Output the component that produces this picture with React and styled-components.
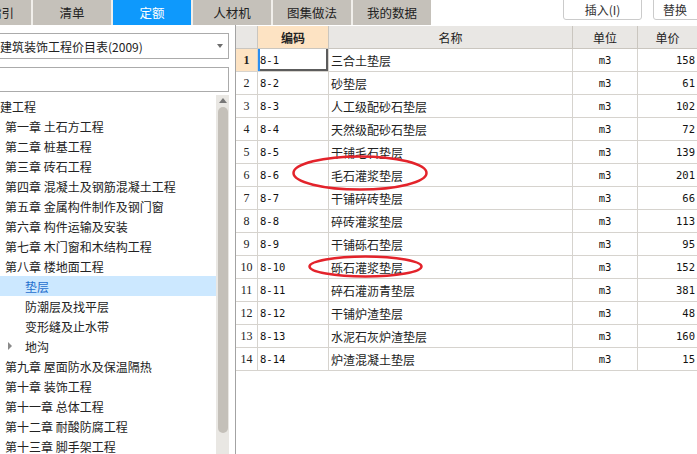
import React from 'react';
import styled, { createGlobalStyle, css } from 'styled-components';

const GlobalStyle = createGlobalStyle`
  body {
    margin: 0;
    background: #fff;
  }
`;

const Root = styled.div`
  position: relative;
  width: 697px;
  height: 454px;
  overflow: hidden;
  background: #fff;
  display: flex;
  flex-direction: column;
  font-family: "Noto Sans CJK SC", "Noto Sans", sans-serif;
  font-size: 12px;
  color: #222;
`;

const TopBar = styled.div`
  display: flex;
  height: 25px;
  flex-shrink: 0;
`;

const Tabs = styled.div`
  display: flex;
  gap: 2px;
  margin-left: -28px;
  height: 25px;
  background: #f1efeb;
`;

const Tab = styled.div`
  width: ${(p) => p.$w || 78}px;
  height: 25px;
  display: flex;
  align-items: center;
  justify-content: center;
  font-size: 12.5px;
  background: ${(p) => (p.$active ? '#0e99fc' : '#c5c1ba')};
  color: ${(p) => (p.$active ? '#fff' : '#222')};
`;

const Buttons = styled.div`
  display: flex;
  gap: 11px;
  margin-left: 132px;
`;

const Button = styled.div`
  width: 79px;
  height: 24px;
  margin-top: -4px;
  box-sizing: border-box;
  border: 1px solid #cbcbcb;
  border-radius: 3px;
  background: #fff;
  display: flex;
  align-items: center;
  justify-content: ${(p) => (p.$start ? 'flex-start' : 'center')};
  padding-left: ${(p) => (p.$start ? 9 : 0)}px;
  padding-top: 3px;
  color: #333;
  flex-shrink: 0;
`;

const Body = styled.div`
  display: flex;
  flex: 1;
  min-height: 0;
`;

const LeftPanel = styled.div`
  width: 243px;
  margin-left: -14px;
  padding-top: 8px;
  display: flex;
  flex-direction: column;
  flex-shrink: 0;
`;

const Field = styled.div`
  height: ${(p) => p.$h}px;
  margin-top: ${(p) => p.$mt || 0}px;
  box-sizing: border-box;
  border: 1px solid #ababab;
  display: flex;
  align-items: center;
  padding-left: 13px;
  padding-right: 5px;
`;

const FieldText = styled.span`
  flex: 1;
`;

const DropArrow = styled.span`
  width: 0;
  height: 0;
  border-left: 3.5px solid transparent;
  border-right: 3.5px solid transparent;
  border-top: 4px solid #6d6d6d;
`;

const TreeArea = styled.div`
  margin-top: 3px;
  flex: 1;
  display: flex;
  min-height: 0;
`;

const TreeList = styled.div`
  flex: 1;
  padding-top: 1px;
  overflow: hidden;
`;

const TreeRow = styled.div`
  height: 20px;
  display: flex;
  align-items: center;
  padding-left: ${(p) => p.$pad}px;
  white-space: nowrap;
  ${(p) =>
    p.$selected &&
    css`
      background: #cce8ff;
      color: #1f6fce;
    `}
`;

const Caret = styled.span`
  width: 0;
  height: 0;
  border-left: 4px solid #8a8a8a;
  border-top: 4px solid transparent;
  border-bottom: 4px solid transparent;
  margin-right: 13px;
`;

const Scrollbar = styled.div`
  width: 13px;
  background: #e9e7e3;
  display: flex;
  flex-direction: column;
  align-items: center;
`;

const UpArrow = styled.span`
  margin-top: 3px;
  width: 0;
  height: 0;
  border-left: 4px solid transparent;
  border-right: 4px solid transparent;
  border-bottom: 5px solid #777;
`;

const Thumb = styled.div`
  margin-top: 4px;
  width: 10px;
  height: 326px;
  border-radius: 5px;
  background: #c4c0b9;
`;

const TablePanel = styled.div`
  flex: 1;
  margin-left: 6px;
  border-left: 1px solid #a3a3a3;
  padding-top: 1px;
  overflow: hidden;
`;

const Row = styled.div`
  display: grid;
  grid-template-columns: 22px 71px 244px 65px 60px;
  height: 23px;
`;

const Cell = styled.div`
  box-sizing: border-box;
  border-right: 1px solid #d6d3ce;
  border-bottom: 1px solid #d6d3ce;
  display: flex;
  align-items: center;
  white-space: nowrap;
  justify-content: ${(p) => p.$align || 'flex-start'};
  padding: 0 2px;
`;

const HeadCell = styled(Cell)`
  justify-content: center;
  background: ${(p) => (p.$hot ? '#fde3c3' : '#e9e7e4')};
  border-color: #cac6bf;
  font-weight: ${(p) => (p.$hot ? 'bold' : 'normal')};
`;

const NumCell = styled(Cell)`
  justify-content: center;
  padding: 0;
  font-family: "Liberation Serif", serif;
  font-size: 12px;
  background: ${(p) => (p.$hot ? '#fde3c3' : '#fff')};
  font-weight: ${(p) => (p.$hot ? 'bold' : 'normal')};
`;

const mono = css`
  font-family: "DejaVu Sans Mono", "Liberation Mono", monospace;
  font-size: 10.5px;
  color: #111;
`;

const CodeCell = styled(Cell)`
  ${mono}
  ${(p) =>
    p.$focus &&
    css`
      box-shadow: inset 2px 0 0 #2b8ef0, inset -2px -2px 0 #5c5c5c;
    `}
`;

const MonoCell = styled(Cell)`
  ${mono}
`;

const Mark = styled.svg`
  position: absolute;
  left: ${(p) => p.$x}px;
  top: ${(p) => p.$y}px;
  pointer-events: none;
`;

const tree = [
  { t: '土建工程', pad: 2 },
  { t: '第一章 土石方工程', pad: 19 },
  { t: '第二章 桩基工程', pad: 19 },
  { t: '第三章 砖石工程', pad: 19 },
  { t: '第四章 混凝土及钢筋混凝土工程', pad: 19 },
  { t: '第五章 金属构件制作及钢门窗', pad: 19 },
  { t: '第六章 构件运输及安装', pad: 19 },
  { t: '第七章 木门窗和木结构工程', pad: 19 },
  { t: '第八章 楼地面工程', pad: 19 },
  { t: '垫层', pad: 39, selected: true },
  { t: '防潮层及找平层', pad: 39 },
  { t: '变形缝及止水带', pad: 39 },
  { t: '地沟', pad: 22, caret: true },
  { t: '第九章 屋面防水及保温隔热', pad: 19 },
  { t: '第十章 装饰工程', pad: 19 },
  { t: '第十一章 总体工程', pad: 19 },
  { t: '第十二章 耐酸防腐工程', pad: 19 },
  { t: '第十三章 脚手架工程', pad: 19 },
];

const rows = [
  ['8-1', '三合土垫层', '158'],
  ['8-2', '砂垫层', '61'],
  ['8-3', '人工级配砂石垫层', '102'],
  ['8-4', '天然级配砂石垫层', '72'],
  ['8-5', '干铺毛石垫层', '139'],
  ['8-6', '毛石灌浆垫层', '201'],
  ['8-7', '干铺碎砖垫层', '66'],
  ['8-8', '碎砖灌浆垫层', '113'],
  ['8-9', '干铺砾石垫层', '95'],
  ['8-10', '砾石灌浆垫层', '152'],
  ['8-11', '碎石灌沥青垫层', '381'],
  ['8-12', '干铺炉渣垫层', '48'],
  ['8-13', '水泥石灰炉渣垫层', '160'],
  ['8-14', '炉渣混凝土垫层', '15'],
];

const RedRing = ({ x, y, w, h }) => (
  <Mark $x={x} $y={y} width={w} height={h}>
    <ellipse
      cx={w / 2}
      cy={h / 2}
      rx={w / 2 - 1.5}
      ry={h / 2 - 1.5}
      fill="none"
      stroke="#e3232b"
      strokeWidth="2.5"
    />
  </Mark>
);

const App = () => {
  return (
    <Root>
      <GlobalStyle />
      <TopBar>
        <Tabs>
          <Tab $w={59}>指引</Tab>
          <Tab>清单</Tab>
          <Tab $active>定额</Tab>
          <Tab>人材机</Tab>
          <Tab>图集做法</Tab>
          <Tab>我的数据</Tab>
        </Tabs>
        <Buttons>
          <Button>插入(I)</Button>
          <Button $start>替换</Button>
        </Buttons>
      </TopBar>
      <Body>
        <LeftPanel>
          <Field $h={26}>
            <FieldText>建筑装饰工程价目表(2009)</FieldText>
            <DropArrow />
          </Field>
          <Field $h={25} $mt={8} />
          <TreeArea>
            <TreeList>
              {tree.map((n) => (
                <TreeRow key={n.t} $pad={n.pad} $selected={n.selected}>
                  {n.caret && <Caret />}
                  {n.t}
                </TreeRow>
              ))}
            </TreeList>
            <Scrollbar>
              <UpArrow />
              <Thumb />
            </Scrollbar>
          </TreeArea>
        </LeftPanel>
        <TablePanel>
          <Row>
            <HeadCell />
            <HeadCell $hot>编码</HeadCell>
            <HeadCell>名称</HeadCell>
            <HeadCell>单位</HeadCell>
            <HeadCell>单价</HeadCell>
          </Row>
          {rows.map(([code, name, price], i) => (
            <Row key={code}>
              <NumCell $hot={i === 0}>{i + 1}</NumCell>
              <CodeCell $focus={i === 0}>{code}</CodeCell>
              <Cell>{name}</Cell>
              <MonoCell $align="center">m3</MonoCell>
              <MonoCell $align="flex-end">{price}</MonoCell>
            </Row>
          ))}
        </TablePanel>
      </Body>
      <RedRing x={292} y={155} w={136} h={36} />
      <RedRing x={308} y={255} w={115} h={23} />
    </Root>
  );
};

export default App;
